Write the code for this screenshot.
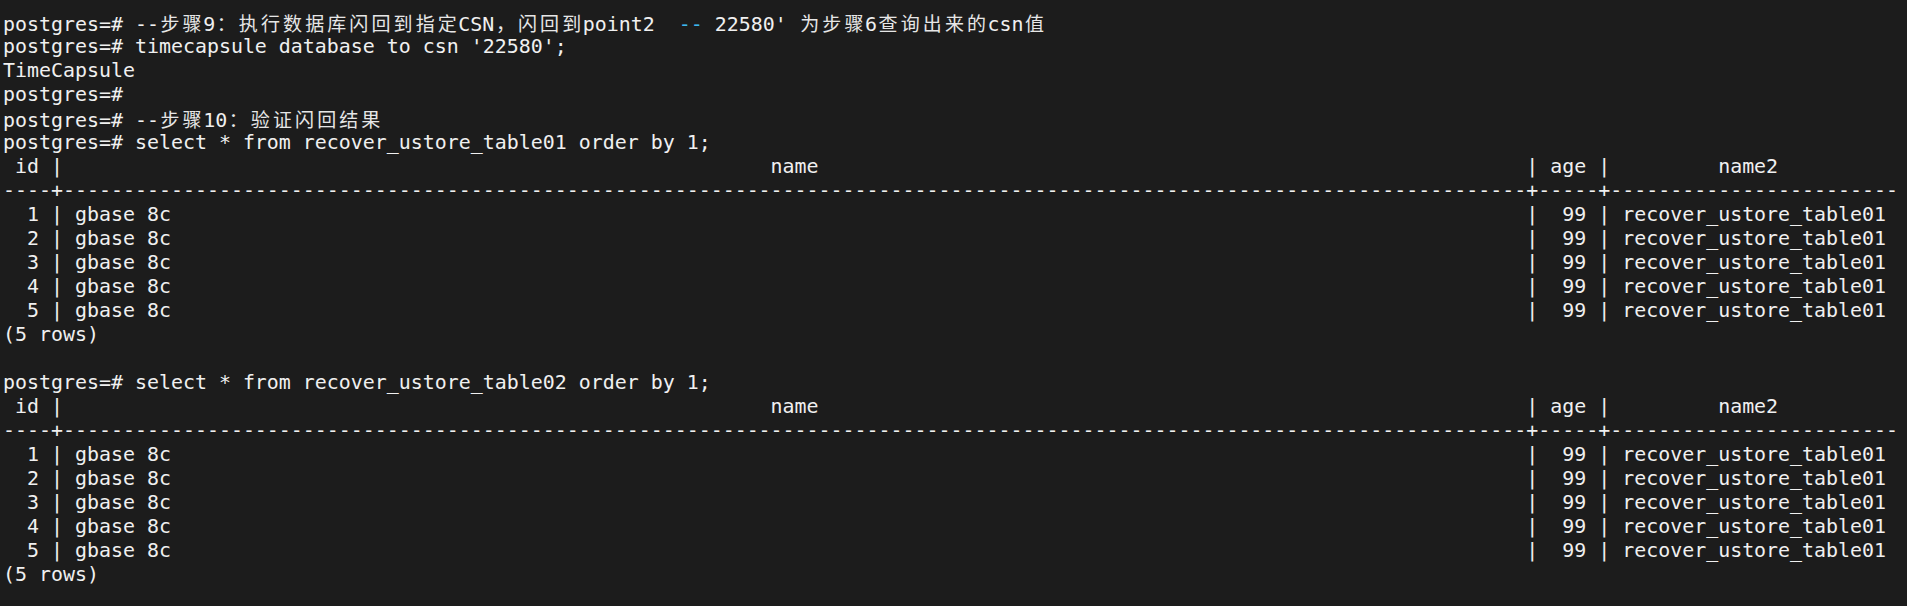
import React from "react";

const CJK = /[\u3000-\u303f\u3400-\u9fff\uff00-\uffef]/;

function renderText(text: string, keyBase: string) {
  const out: React.ReactNode[] = [];
  let buf = "";
  let k = 0;
  for (const ch of text) {
    if (CJK.test(ch)) {
      if (buf) {
        out.push(<span key={keyBase + "-" + k++}>{buf}</span>);
        buf = "";
      }
      out.push(
        <span
          key={keyBase + "-" + k++}
          className="inline-block w-[2ch] text-center leading-[24px] text-[#e6e6e6]"
          style={{ fontFamily: '"Noto Sans CJK SC", sans-serif' }}
        >
          <span className="text-[19px]">{ch}</span>
        </span>
      );
    } else {
      buf += ch;
    }
  }
  if (buf) out.push(<span key={keyBase + "-" + k++}>{buf}</span>);
  return out;
}

type Seg = { t: string; c?: string };

const W = 120;
const center = (s: string, w: number) => {
  const left = Math.floor((w - s.length) / 2);
  return " ".repeat(left) + s + " ".repeat(w - s.length - left);
};

const header =
  " id |" + " " + center("name", W) + " " + "|" + " age " + "|" + " " + center("name2", 22) + " ";
const dashes = "----+" + "-".repeat(W + 2) + "+-----+" + "-".repeat(24);
const row = (n: number) =>
  "  " + n + " | " + "gbase 8c".padEnd(W) + " |  99 | recover_ustore_table01";

const tableBlock = (tbl: string): Seg[][] => [
  [{ t: "postgres=# select * from " + tbl + " order by 1;" }],
  [{ t: header }],
  [{ t: dashes }],
  [{ t: row(1) }],
  [{ t: row(2) }],
  [{ t: row(3) }],
  [{ t: row(4) }],
  [{ t: row(5) }],
  [{ t: "(5 rows)" }],
];

const lines: Seg[][] = [
  [
    { t: "postgres=# --步骤9：执行数据库闪回到指定CSN，闪回到point2  " },
    { t: "--", c: "text-[#3db8ec]" },
    { t: " 22580' 为步骤6查询出来的csn值" },
  ],
  [{ t: "postgres=# timecapsule database to csn '22580';" }],
  [{ t: "TimeCapsule" }],
  [{ t: "postgres=#" }],
  [{ t: "postgres=# --步骤10：验证闪回结果" }],
  ...tableBlock("recover_ustore_table01"),
  [{ t: "" }],
  ...tableBlock("recover_ustore_table02"),
];

export default function App() {
  return (
    <div
      className="w-[1907px] h-[606px] overflow-hidden bg-[#1c1c1c] text-[#f0f0f0] pt-[11px] pl-[3px] text-[19.93px] antialiased"
      style={{ fontFamily: '"DejaVu Sans Mono", monospace' }}
    >
      {lines.map((segs, i) => (
        <div key={i} className="h-[24px] leading-[24px] whitespace-pre">
          {segs.map((s, j) => (
            <span key={j} className={s.c}>
              {renderText(s.t, i + "-" + j)}
            </span>
          ))}
        </div>
      ))}
    </div>
  );
}
